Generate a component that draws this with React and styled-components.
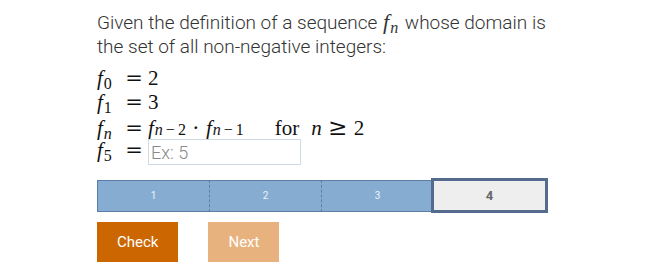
import React from "react";
import styled, { createGlobalStyle } from "styled-components";

const GlobalStyle = createGlobalStyle`
  body {
    margin: 0;
    background: #fff;
    font-family: Roboto, "Liberation Sans", sans-serif;
  }
`;

const Page = styled.div`
  padding: 10px 0 0 97px;
`;

const Prompt = styled.p`
  margin: 0;
  max-width: 452px;
  font-size: 19px;
  font-weight: 300;
  line-height: 24px;
  color: #333;
`;

const Var = styled.span`
  font-family: "Liberation Serif", "DejaVu Serif", serif;
  font-style: italic;
`;

const InlineMath = styled.span`
  font-family: "Liberation Serif", "DejaVu Serif", serif;
  font-size: 22px;
  margin: 0 2px 0 1px;
`;

const Sub = styled.sub`
  font-family: "Liberation Serif", serif;
  font-size: 16px;
  vertical-align: -4px;
  line-height: 0;
  margin-left: 1px;
`;

const Minus = styled.span`
  margin: 0 3px;
`;

const Equations = styled.div`
  margin-top: 7px;
  font-family: "Liberation Serif", "DejaVu Serif", serif;
  font-size: 21px;
  color: #111;
`;

const EqRow = styled.div`
  display: flex;
  align-items: baseline;
  height: 24px;
`;

const Lhs = styled.span`
  display: inline-block;
  width: 28px;
`;

const Op = styled.span`
  display: inline-block;
  width: ${(p) => p.$w}px;
  margin-right: ${(p) => p.$after || 0}px;
  text-align: center;
  font-family: "DejaVu Serif", serif;
  font-size: ${(p) => p.$size || 21}px;
`;

const ForText = styled.span`
  margin-left: 31px;
  margin-right: 12px;
`;

const Answer = styled.input`
  box-sizing: border-box;
  width: 153px;
  height: 26px;
  border: 1px solid #cfdbe3;
  padding: 0 2px;
  font-family: Roboto, "Liberation Sans", sans-serif;
  font-size: 18px;
  font-weight: 300;
  color: #333;
  outline: none;
  align-self: center;
  position: relative;
  top: 2px;
  &::placeholder {
    color: #8a8a8a;
  }
`;

const Progress = styled.div`
  display: flex;
  align-items: center;
  margin-top: 16px;
  height: 35px;
`;

const Step = styled.div`
  box-sizing: border-box;
  flex: 0 0 112px;
  height: 32px;
  display: flex;
  align-items: center;
  justify-content: center;
  background: #87acd2;
  border-top: 1px solid #5a7ea6;
  border-bottom: 1px solid #5a7ea6;
  border-left: ${(p) => (p.$first ? "1px solid #5a7ea6" : "1px dashed #5a7ea6")};
  color: #eef3f8;
  font-size: 10px;
`;

const Current = styled.div`
  box-sizing: border-box;
  flex: 0 0 117px;
  height: 35px;
  margin-left: -2px;
  display: flex;
  align-items: center;
  justify-content: center;
  background: #eeeeee;
  border: 3px solid #556b8e;
  color: #666;
  font-weight: bold;
  font-size: 13px;
`;

const Actions = styled.div`
  display: flex;
  gap: 30px;
  margin-top: 9px;
`;

const Button = styled.button`
  height: 40px;
  padding: 0 ${(p) => p.$pad}px;
  border: none;
  background: ${(p) => p.$bg};
  color: #fff;
  font-family: Roboto, "Liberation Sans", sans-serif;
  font-size: 15px;
  cursor: pointer;
`;

const F = ({ children }) => (
  <>
    <Var>f</Var>
    <Sub>{children}</Sub>
  </>
);

const App = () => (
  <>
    <GlobalStyle />
    <Page>
      <Prompt>
        Given the definition of a sequence{" "}
        <InlineMath>
          <F>
            <Var>n</Var>
          </F>
        </InlineMath>{" "}
        whose domain is the set of all non-negative integers:
      </Prompt>
      <Equations>
        <EqRow>
          <Lhs>
            <F>0</F>
          </Lhs>
          <Op $w={18} $after={5}>=</Op>2
        </EqRow>
        <EqRow>
          <Lhs>
            <F>1</F>
          </Lhs>
          <Op $w={18} $after={5}>=</Op>3
        </EqRow>
        <EqRow>
          <Lhs>
            <F>
              <Var>n</Var>
            </F>
          </Lhs>
          <Op $w={18} $after={5}>=</Op>
          <F>
            <Var>n</Var>
            <Minus>−</Minus>2
          </F>
          <Op $w={20}>·</Op>
          <F>
            <Var>n</Var>
            <Minus>−</Minus>1
          </F>
          <ForText>for</ForText>
          <Var>n</Var>
          <Op $w={32} $size={23}>≥</Op>2
        </EqRow>
        <EqRow>
          <Lhs>
            <F>5</F>
          </Lhs>
          <Op $w={18} $after={5}>=</Op>
          <Answer placeholder="Ex: 5" />
        </EqRow>
      </Equations>
      <Progress>
        <Step $first>1</Step>
        <Step>2</Step>
        <Step>3</Step>
        <Current>4</Current>
      </Progress>
      <Actions>
        <Button $bg="#cc6600" $pad={20}>Check</Button>
        <Button $bg="#e8b27e" $pad={20}>Next</Button>
      </Actions>
    </Page>
  </>
);

export default App;
